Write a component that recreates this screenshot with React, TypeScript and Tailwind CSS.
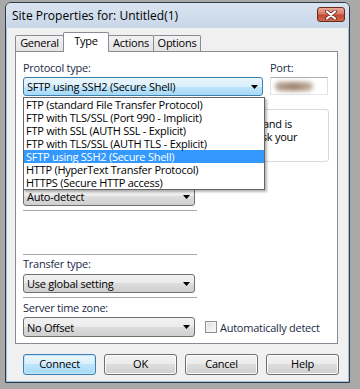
import React from "react";

const COMBO_GRAY =
  "border-[#707070] bg-[linear-gradient(to_bottom,#f2f2f2_0%,#ebebeb_50%,#dddddd_50%,#cfcfcf_100%)]";
const COMBO_BLUE =
  "border-[#3c7fb1] bg-[linear-gradient(to_bottom,#eaf6fd_0%,#d9f0fc_50%,#bee6fd_50%,#a7d9f5_100%)]";

const PROTOCOLS = [
  "FTP (standard File Transfer Protocol)",
  "FTP with TLS/SSL (Port 990 - Implicit)",
  "FTP with SSL (AUTH SSL - Explicit)",
  "FTP with TLS/SSL (AUTH TLS - Explicit)",
  "SFTP using SSH2 (Secure Shell)",
  "HTTP (HyperText Transfer Protocol)",
  "HTTPS (Secure HTTP access)",
];

function Arrow() {
  return (
    <svg width="7" height="4" viewBox="0 0 7 4" className="shrink-0">
      <path d="M0 0h7L3.5 4z" fill="#000" />
    </svg>
  );
}

function Combo({ text, blue, className = "" }: { text: string; blue?: boolean; className?: string }) {
  return (
    <div
      className={`flex items-center justify-between rounded-[3px] border pl-[3px] pr-[4px] leading-[13px] ${
        blue ? COMBO_BLUE : COMBO_GRAY
      } ${className}`}
    >
      <span className="whitespace-nowrap">{text}</span>
      <Arrow />
    </div>
  );
}

function Tab({ label, active, className = "" }: { label: string; active?: boolean; className?: string }) {
  return (
    <div
      className={`flex items-center justify-center border-x border-t border-[#898c95] rounded-t-[2px] ${
        active
          ? "relative z-10 h-[20px] -mb-px bg-white pb-[2px]"
          : "h-[16px] bg-[linear-gradient(to_bottom,#f2f2f2,#e3e3e3)]"
      } ${className}`}
    >
      {label}
    </div>
  );
}

function Button({ label, primary }: { label: string; primary?: boolean }) {
  return (
    <div
      className={`w-[73px] h-[21px] flex items-center justify-center rounded-[3px] border ${
        primary
          ? "border-[#3c7fb1] bg-[linear-gradient(to_bottom,#eaf6fd_0%,#d9f0fc_50%,#bee6fd_50%,#a7d9f5_100%)] shadow-[inset_0_0_0_1px_#c4e6f8]"
          : "border-[#707070] bg-[linear-gradient(to_bottom,#f2f2f2_0%,#ebebeb_50%,#dddddd_50%,#cfcfcf_100%)] shadow-[inset_0_0_0_1px_#fcfcfc]"
      }`}
    >
      {label}
    </div>
  );
}

export default function App() {
  const label = "leading-[13px] text-[#1b2a47]";
  return (
    <div className="w-[360px] h-[389px] bg-[#a9a9a9] pt-[2px] pl-[5px] overflow-hidden font-['Open_Sans',sans-serif] text-[11px] text-black">
      <div className="w-[345px] h-[381px] rounded-t-[6px] border border-[#2f3a46] bg-[#f0f0f0] flex flex-col shadow-[inset_0_0_0_1px_#9fc3e3]">
        {/* title bar */}
        <div className="h-[25px] shrink-0 flex justify-between pl-[6px] pr-[4px] rounded-t-[5px] bg-[linear-gradient(to_bottom,#d9e4f1,#c8d7e8)]">
          <span className="self-center text-[12px] leading-[14px]">Site Properties for: Untitled(1)</span>
          <div className="mt-[4px] w-[28px] h-[15px] rounded-[3px] border border-[#6a2a20] bg-[linear-gradient(to_bottom,#e8a897_0%,#d77a63_45%,#c2462f_55%,#d06a4f_100%)] flex items-center justify-center">
            <svg width="12" height="10" viewBox="0 0 12 10">
              <path d="M2 1.5L10 8.5M10 1.5L2 8.5" stroke="#5a1f16" strokeWidth="3.6" strokeLinecap="round" />
              <path d="M2 1.5L10 8.5M10 1.5L2 8.5" stroke="#fff" strokeWidth="2.2" strokeLinecap="round" />
            </svg>
          </div>
        </div>

        <div className="flex-1 pl-[9px] pr-[10px] pt-[4px] tracking-[-0.25px]">
          {/* tabs */}
          <div className="flex items-end h-[19px]">
            <Tab label="General" className="w-[49px]" />
            <Tab label="Type" active className="w-[46px] -ml-px" />
            <Tab label="Actions" className="w-[46px] -ml-px" />
            <Tab label="Options" className="w-[48px] -ml-px" />
          </div>

          {/* panel */}
          <div className="w-[323px] h-[293px] border border-[#898c95] bg-white pt-[9px] pl-[7px]">
            <div className="flex">
              <div className="w-[240px] relative">
                <div className={label}>Protocol type:</div>
                <div className="relative mt-[3px]">
                  <Combo text="SFTP using SSH2 (Secure Shell)" blue className="h-[19px]" />
                  {/* open dropdown list */}
                  <div className="absolute left-0 top-[20px] z-20 w-[242px] border border-[#646464] bg-white shadow-[2px_2px_2px_rgba(0,0,0,0.28)]">
                    {PROTOCOLS.map((p, i) => (
                      <div
                        key={p}
                        className={`h-[13px] leading-[13px] pl-[2px] whitespace-nowrap ${
                          i === 4 ? "bg-[#3399ff] text-white" : ""
                        }`}
                      >
                        {p}
                      </div>
                    ))}
                  </div>
                </div>
              </div>
              <div className="ml-[7px] w-[58px]">
                <div className={label}>Port:</div>
                <div className="mt-[3px] h-[18px] border border-[#abadb3] border-b-[#e3e9ef] border-x-[#dbdfe6] bg-white flex items-center pl-[4px]">
                  <div className="w-[38px] h-[9px] rounded-full blur-[2px] bg-[linear-gradient(to_right,#b9a99a,#9c8470,#c6b5a4)]" />
                </div>
              </div>
            </div>

            {/* info box (partly hidden by the list) */}
            <div className="mt-[13px] w-[306px] h-[53px] rounded-[3px] border border-[#d9d9d9] pt-[7px] leading-[13px]">
              <div className="pl-[239px]">and is</div>
              <div className="pl-[232px]">ask your</div>
            </div>

            {/* space of the label hidden under the list */}
            <div className="mt-[9px] h-[13px]" />
            <Combo text="Auto-detect" className="mt-[3px] w-[172px] h-[19px]" />
            <div className="mt-[4px] w-[174px] h-px bg-[#a9a9a9]" />
            <div className="mt-[43px] w-[174px] h-px bg-[#a9a9a9]" />

            <div className={`mt-[2px] ${label}`}>Transfer type:</div>
            <Combo text="Use global setting" className="mt-[4px] w-[172px] h-[19px]" />
            <div className="mt-[4px] w-[174px] h-px bg-[#a9a9a9]" />

            <div className={`mt-[3px] ${label}`}>Server time zone:</div>
            <div className="mt-[3px] flex items-center">
              <Combo text="No Offset" className="w-[172px] h-[20px]" />
              <div className="ml-[10px] w-[12px] h-[12px] border border-[#8e8f8f] bg-[linear-gradient(to_bottom_right,#dcdcdc,#fbfbfb)] shadow-[inset_0_0_0_1px_#f4f4f4]" />
              <span className={`ml-[3px] ${label}`}>Automatically detect</span>
            </div>
          </div>

          {/* buttons */}
          <div className="mt-[10px] pl-[8px] flex gap-[8px]">
            <Button label="Connect" primary />
            <Button label="OK" />
            <Button label="Cancel" />
            <Button label="Help" />
          </div>
        </div>
      </div>
    </div>
  );
}
